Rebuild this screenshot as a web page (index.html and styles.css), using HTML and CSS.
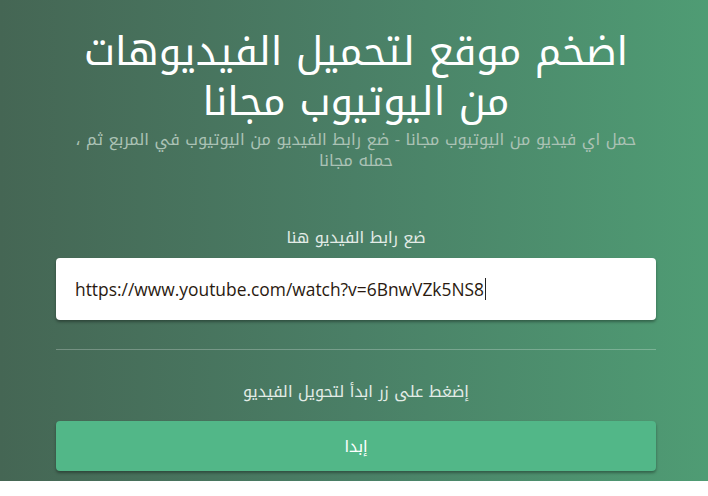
FILE: index.html
```html
<!DOCTYPE html>
<html lang="ar" dir="rtl">
<head>
<meta charset="utf-8">
<title>تحميل الفيديوهات من اليوتيوب</title>
<link rel="stylesheet" href="styles.css">
</head>
<body>
<section class="hero">
  <div class="container">
    <h1 class="title">اضخم موقع لتحميل الفيديوهات من اليوتيوب مجانا</h1>
    <p class="subtitle">حمل اي فيديو من اليوتيوب مجانا - ضع رابط الفيديو من اليوتيوب في المربع ثم ، حمله مجانا</p>
    <form class="form">
      <label class="label" for="url">ضع رابط الفيديو هنا</label>
      <div class="input" dir="ltr"><span class="input-text">https://www.youtube.com/watch?v=6BnwVZk5NS8</span><span class="caret"></span></div>
      <hr class="divider">
      <p class="label label-2">إضغط على زر ابدأ لتحويل الفيديو</p>
      <button type="button" class="btn">إبدا</button>
    </form>
  </div>
</section>
</body>
</html>
```
FILE: styles.css
```css
html, body {
  margin: 0;
  padding: 0;
  background: #ffffff;
}
body {
  font-family: "Noto Kufi Arabic", "Noto Sans Arabic", "DejaVu Sans", sans-serif;
}
.hero {
  height: 481px;
  background: linear-gradient(to right, #456654 0%, #4a7f66 50%, #4f9c74 100%);
  box-sizing: border-box;
  padding-top: 27px;
}
.container {
  width: 600px;
  margin-right: 52px;
  margin-left: 56px;
  text-align: center;
}
.title {
  margin: 0;
  color: #ffffff;
  font-size: 40px;
  font-weight: 400;
  line-height: 50px;
}
.subtitle {
  margin: 2px 0 0;
  padding: 0 12px;
  color: #abc2b5;
  font-size: 16.3px;
  line-height: 21px;
}
.form {
  display: flex;
  flex-direction: column;
  margin-top: 56px;
}
.label {
  display: block;
  margin: 0;
  color: #e3ece7;
  font-size: 16px;
  line-height: 22px;
}
.input {
  margin-top: 9px;
  height: 62px;
  background: #ffffff;
  border-radius: 4px;
  box-shadow: 0 2px 3px rgba(0,0,0,0.35);
  display: flex;
  align-items: center;
  padding-left: 19px;
  box-sizing: border-box;
  text-align: left;
}
.input-text {
  font-family: "Open Sans", "DejaVu Sans", sans-serif;
  font-size: 17.4px;
  color: #2a1a10;
}
.caret {
  display: inline-block;
  width: 1px;
  height: 22px;
  background: #222;
  margin-left: 1px;
}
.divider {
  margin: 29px 0 0;
  border: 0;
  height: 1px;
  background: rgba(255,255,255,0.25);
}
.label-2 {
  margin-top: 31px;
}
.btn {
  margin-top: 18px;
  height: 50px;
  border: 0;
  border-radius: 4px;
  background: #52b788;
  color: #ffffff;
  font-family: inherit;
  font-size: 16px;
  box-shadow: 0 2px 3px rgba(0,0,0,0.35);
  padding: 0;
}
```
